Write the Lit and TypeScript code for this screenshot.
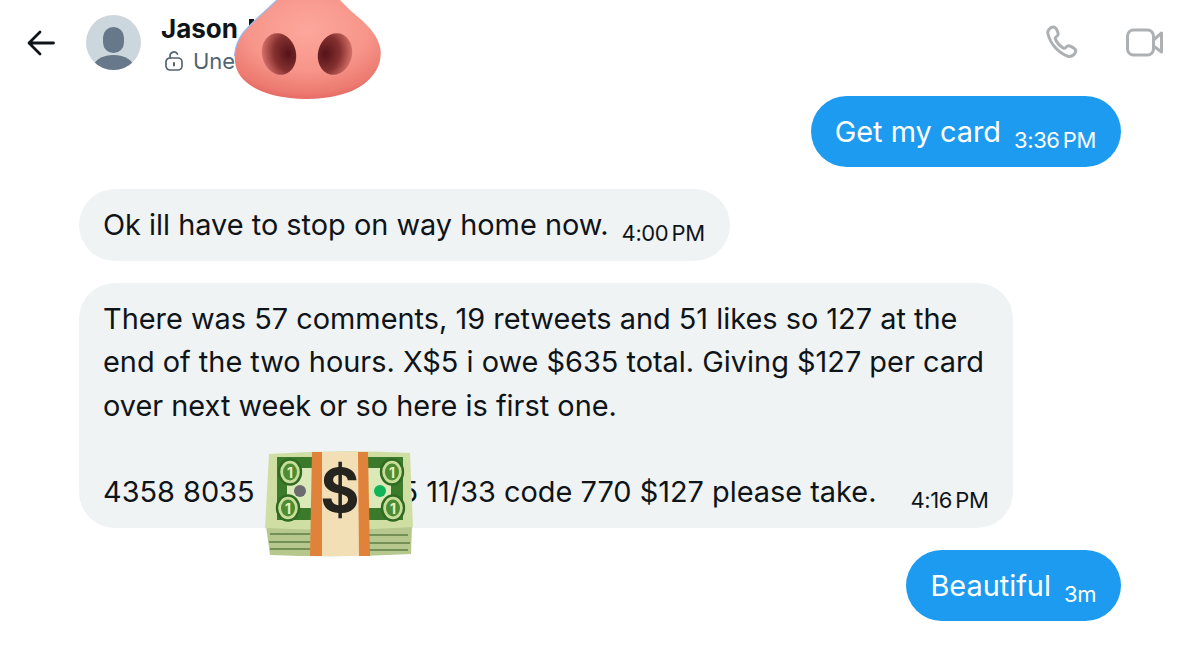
import { LitElement, html, css, svg } from "lit";
import { customElement } from "lit/decorators.js";

const nose = svg`<svg class="nose" viewBox="0 0 147 100" width="147" height="100" aria-hidden="true">
<defs>
<radialGradient id="nb" cx=".5" cy=".3" r=".75"><stop offset="0" stop-color="#fda79c"/><stop offset=".55" stop-color="#f7958a"/><stop offset=".85" stop-color="#ec7a70"/><stop offset="1" stop-color="#e2615c"/></radialGradient>
<radialGradient id="nh" cx=".78" cy=".55" r=".85"><stop offset="0" stop-color="#551319"/><stop offset=".5" stop-color="#84302f"/><stop offset=".88" stop-color="#cf6a64"/><stop offset="1" stop-color="#e27d75"/></radialGradient>
<radialGradient id="nh2" cx=".22" cy=".55" r=".85"><stop offset="0" stop-color="#551319"/><stop offset=".5" stop-color="#84302f"/><stop offset=".88" stop-color="#cf6a64"/><stop offset="1" stop-color="#e27d75"/></radialGradient>
</defs>
<path d="M43 0C33 10 20 20 9 33C1 43-1 56 2 67C7 84 28 95 56 98C82 101 113 97 130 84C143 74 149 60 146 47C142 30 127 20 116 10L106 0Z" fill="url(#nb)"/>
<path d="M43 0C33 10 20 20 9 33C4 40 1 48 0.500 56" fill="none" stroke="#9db7e6" stroke-width="1.300"/>
<ellipse cx="45" cy="54" rx="17" ry="21" transform="rotate(-14 45 54)" fill="url(#nh)"/>
<ellipse cx="101" cy="54" rx="17" ry="21" transform="rotate(14 101 54)" fill="url(#nh2)"/>
</svg>`;

const coin = (x: number, y: number) => svg`<g transform="translate(${x} ${y})">
<ellipse rx="11" ry="12.500" fill="#c9dd9a" stroke="#2f6b22" stroke-width="2.400"/>
<ellipse rx="7" ry="8.500" fill="#4d8c32"/>
<text class="one" x="0" y="5.500" text-anchor="middle">1</text></g>`;

const money = svg`<svg class="money" viewBox="0 0 148 107" width="148" height="107" aria-hidden="true">
<path d="M1 76L147 76L146 104Q74 108 5 105Z" fill="#b7c88f"/>
<path d="M5 84H45M103 85H143M4 92H45M103 93H145M5 99H45M103 100H143" stroke="#5f7d45" stroke-width="1.300"/>
<path d="M4 4Q74 -1 145 3L148 77Q74 82 0 78Z" fill="#cfdfa3"/>
<rect x="12" y="7" width="126" height="63" fill="#3c7a2b"/>
<rect x="22" y="18" width="104" height="40" fill="#dbe8b8"/>
<circle cx="35" cy="41" r="6" fill="#6b6b70"/><circle cx="115" cy="41" r="6" fill="#12b45a"/>
${coin(25, 22)}${coin(23, 58)}${coin(127, 22)}${coin(128, 58)}
<rect x="57" y="2" width="37" height="104" fill="#f3dfb6"/>
<path d="M47 2H57V106H45ZM93 2H103L105 106H94Z" fill="#e0823a"/>
<text class="dollar" x="75" y="62" text-anchor="middle">$</text>
</svg>`;

@customElement("app-root")
export class AppRoot extends LitElement {
  static styles = css`
    :host { display: block; width: 1200px; height: 652px; background: #fff; overflow: hidden; font-family: Inter, "Liberation Sans", sans-serif; color: #0f1419; position: relative; }
    .head { height: 96px; display: flex; align-items: flex-start; position: relative; }
    .back { margin: 30px 0 0 27px; }
    .avatar { margin: 15px 0 0 31px; }
    .who { margin: 14px 0 0 20px; }
    .name { font-size: 26px; font-weight: 700; line-height: 30px; white-space: nowrap; display: flex; align-items: center; }
    .stem { width: 5px; height: 20px; margin-left: 11px; background: #0f1419; }
    .enc { display: flex; align-items: center; gap: 10px; margin-top: 2px; font-size: 22px; line-height: 30px; color: #536471; margin-left: 4px; }
    .acts { display: flex; gap: 48px; margin: 25px 37px 0 auto; align-items: center; }
    .nose { position: absolute; left: 234px; top: 0; }
    .list { display: flex; flex-direction: column; gap: 22px; padding: 0 79px; position: relative; }
    .b { border-radius: 36px; padding: 14px 25px 14px 24px; font-size: 28.900px; line-height: 43.400px; width: fit-content; box-sizing: border-box; }
    .me { background: #1d9bf0; color: #fff; align-self: flex-end; }
    .them { background: #eff3f4; }
    .line { white-space: nowrap; }
    .t { font-size: 22px; line-height: 1; letter-spacing: -0.400px; word-spacing: -2.500px; margin-left: 13px; vertical-align: -6px; }
    .far { margin-left: 34px; }
    .gap { display: inline-block; width: 146px; }
    .money { position: absolute; left: 265px; top: 354px; }
    .one { font: 700 14px Inter, sans-serif; fill: #e4efc4; }
    .dollar { font: 700 60px Inter, sans-serif; fill: #26241f; }
  `;
  render() {
    return html`
      <div class="head">
        <svg class="back" width="28" height="26" viewBox="0 0 28 26" fill="none" stroke="#0f1419" stroke-width="2.800" stroke-linecap="round" stroke-linejoin="round"><path d="M26.500 13H2M13 2L2 13l11 11"/></svg>
        <svg class="avatar" width="55" height="55" viewBox="0 0 55 55"><defs><clipPath id="av"><circle cx="27.500" cy="27.500" r="27.500"/></clipPath></defs><circle cx="27.500" cy="27.500" r="27.500" fill="#ccd6dd"/><g clip-path="url(#av)" fill="#66788a"><rect x="17" y="12" width="21" height="26" rx="10.500"/><ellipse cx="27.500" cy="54" rx="21" ry="14"/></g></svg>
        <div class="who">
          <div class="name">Jason<span class="stem"></span></div>
          <div class="enc">
            <svg width="18" height="20" viewBox="0 0 18 20" fill="none" stroke="#536471" stroke-width="1.700" stroke-linecap="round"><rect x="1" y="7" width="16" height="12" rx="4"/><path d="M5 7V5a4 4 0 0 1 7.500-2"/><path d="M9 12v2.500" stroke-width="2"/></svg>
            <span>Une</span>
          </div>
        </div>
        <div class="acts">
          <svg width="33" height="34" viewBox="0 0 33 34" fill="none" stroke="#aeb1b4" stroke-width="3" stroke-linejoin="round"><path d="M3 9C2 6 5 2 8 2c2 0 3 1 4 3l1 3c.6 1.600-.5 3-2 4-.8.500-1 1.300-.5 2.400 1.500 3.500 4 6.500 7.500 8.500 1 .6 2 .4 2.800-.4 1.300-1.500 3-2.200 4.500-1.400l3.500 2c1.700 1 2.400 2.900 1.300 4.900-1.300 2.500-4.300 4-7.100 3.300C13 27.500 5.500 19 3 9Z"/></svg>
          <svg width="37" height="29" viewBox="0 0 37 29" fill="none" stroke="#aeb1b4" stroke-width="3" stroke-linejoin="round"><rect x="1.500" y="2" width="26" height="25" rx="6"/><path d="M27.500 12L35.500 5V24L27.500 18Z"/></svg>
        </div>
      </div>
      ${nose}
      <div class="list">
        <div class="b me"><div class="line">Get my card<span class="t">3:36 PM</span></div></div>
        <div class="b them"><div class="line">Ok ill have to stop on way home now.<span class="t">4:00 PM</span></div></div>
        <div class="b them">
          <div class="line">There was 57 comments, 19 retweets and 51 likes so 127 at the</div>
          <div class="line">end of the two hours. X$5 i owe $635 total. Giving $127 per card</div>
          <div class="line">over next week or so here is first one.</div>
          <div class="line">&nbsp;</div>
          <div class="line">4358 8035<span class="gap"></span>5 11/33 code 770 $127 please take.<span class="t far">4:16 PM</span></div>
        </div>
        <div class="b me"><div class="line">Beautiful<span class="t">3m</span></div></div>
        ${money}
      </div>
    `;
  }
}
